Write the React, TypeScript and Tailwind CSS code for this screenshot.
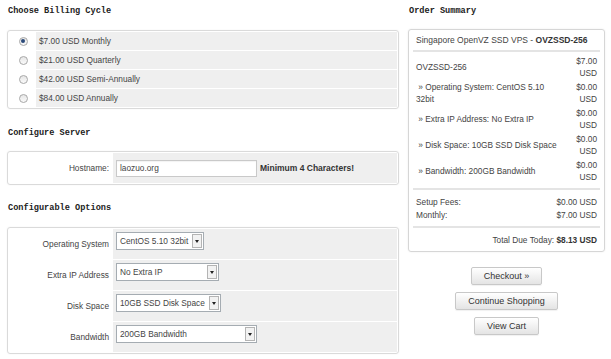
import React from "react";

const cycles = [
  { label: "$7.00 USD Monthly", checked: true },
  { label: "$21.00 USD Quarterly", checked: false },
  { label: "$42.00 USD Semi-Annually", checked: false },
  { label: "$84.00 USD Annually", checked: false },
];

const options = [
  { label: "Operating System", value: "CentOS 5.10 32bit", width: "w-[88px]" },
  { label: "Extra IP Address", value: "No Extra IP", width: "w-[103px]" },
  { label: "Disk Space", value: "10GB SSD Disk Space", width: "w-[105px]" },
  { label: "Bandwidth", value: "200GB Bandwidth", width: "w-[141px]" },
];

const lineItems = [
  { label: "OVZSSD-256", sub: false, price: "$7.00" },
  { label: "Operating System: CentOS 5.10 32bit", sub: true, price: "$0.00" },
  { label: "Extra IP Address: No Extra IP", sub: true, price: "$0.00" },
  { label: "Disk Space: 10GB SSD Disk Space", sub: true, price: "$0.00" },
  { label: "Bandwidth: 200GB Bandwidth", sub: true, price: "$0.00" },
];

function Heading({ children }: { children: React.ReactNode }) {
  return (
    <h2 className="font-['Liberation_Mono',monospace] text-[8.6px] font-bold leading-[12px] text-[#222]">
      {children}
    </h2>
  );
}

function Radio({ checked }: { checked: boolean }) {
  return (
    <span className="flex h-[9px] w-[9px] items-center justify-center rounded-full border border-[#a8a8a8] bg-gradient-to-b from-[#e6e6e6] to-[#fafafa]">
      {checked && <span className="h-[4px] w-[4px] rounded-full bg-[#2b4a7a]" />}
    </span>
  );
}

function Select({ value, width }: { value: string; width: string }) {
  return (
    <div
      className={`flex h-[18px] items-center justify-between border border-[#a5acb2] bg-white pl-[3px] pr-[1px] ${width}`}
    >
      <span className="whitespace-nowrap">{value}</span>
      <span className="flex h-[14px] w-[10px] shrink-0 items-center justify-center border border-[#b4b4b4] bg-[#f2f2f2]">
        <span className="h-0 w-0 border-x-[2px] border-t-[3px] border-x-transparent border-t-[#222]" />
      </span>
    </div>
  );
}

function Button({ children }: { children: React.ReactNode }) {
  return (
    <button className="h-[18px] rounded-[2px] border border-[#c8c8c8] bg-gradient-to-b from-white to-[#e4e4e4] px-[12px] text-[9px] leading-[16px] text-[#333] shadow-[0_1px_1px_rgba(0,0,0,0.06)]">
      {children}
    </button>
  );
}

export default function App() {
  return (
    <div className="flex h-[359px] w-[611px] gap-[9px] bg-white pl-[7px] font-['Liberation_Sans',Arial,sans-serif] text-[8.3px] text-[#444]">
      {/* Left column */}
      <div className="w-[392px]">
        <div className="mb-[13px] mt-[5px] pl-[1px]">
          <Heading>Choose Billing Cycle</Heading>
        </div>
        <div className="flex flex-col gap-[1px] rounded-[3px] border border-[#dadada] p-[1px] shadow-[0_0_2px_rgba(0,0,0,0.06)]">
          {cycles.map((c) => (
            <div key={c.label} className="flex h-[18px] gap-[1px]">
              <div className="flex w-[26px] items-center justify-center pl-[2px]">
                <Radio checked={c.checked} />
              </div>
              <div className="flex flex-1 items-center bg-[#efefef] pl-[3px]">{c.label}</div>
            </div>
          ))}
        </div>

        <div className="mb-[12px] mt-[18px] pl-[1px]">
          <Heading>Configure Server</Heading>
        </div>
        <div className="rounded-[3px] border border-[#dadada] p-[1px] shadow-[0_0_2px_rgba(0,0,0,0.06)]">
          <div className="flex h-[30px] gap-[1px]">
            <div className="flex w-[103px] items-center justify-end pr-[3px]">Hostname:</div>
            <div className="flex flex-1 items-center gap-[3px] bg-[#efefef] pl-[3px]">
              <div className="flex h-[17px] w-[141px] items-center border border-[#c9c9c9] bg-white pl-[3px] shadow-[inset_0_1px_1px_rgba(0,0,0,0.05)]">
                laozuo.org
              </div>
              <span className="text-[8.5px] font-bold text-[#333]">Minimum 4 Characters!</span>
            </div>
          </div>
        </div>

        <div className="mb-[13px] mt-[17px] pl-[1px]">
          <Heading>Configurable Options</Heading>
        </div>
        <div className="flex flex-col gap-[1px] rounded-[3px] border border-[#dadada] p-[1px] shadow-[0_0_2px_rgba(0,0,0,0.06)]">
          {options.map((o) => (
            <div key={o.label} className="flex h-[30px] gap-[1px]">
              <div className="flex w-[103px] items-center justify-end pr-[3px]">{o.label}</div>
              <div className="flex-1 bg-[#efefef] pl-[3px] pt-[3px]">
                <Select value={o.value} width={o.width} />
              </div>
            </div>
          ))}
        </div>
      </div>

      {/* Right column */}
      <div className="w-[197px]">
        <div className="mb-[13px] mt-[5px] pl-[1px]">
          <Heading>Order Summary</Heading>
        </div>
        <div className="-mt-[1px] rounded-[3px] border border-[#d6d6d6] px-[4px] pb-[5px] pt-[4px] shadow-[0_0_2px_rgba(0,0,0,0.08)]">
          <div className="px-[3px] text-[8.5px] leading-[12px]">
            Singapore OpenVZ SSD VPS - <b className="text-[#333]">OVZSSD-256</b>
          </div>
          <div className="mt-[4px] h-[2px] bg-[#e4e4e4]" />

          <div className="mt-[3px] flex flex-col gap-[2px] px-[3px] leading-[12px]">
            {lineItems.map((it) => (
              <div key={it.label} className="flex items-center justify-between">
                <div className="w-[145px]">
                  {it.sub ? `\u00a0» ${it.label}` : it.label}
                </div>
                <div className="w-[26px] text-right">
                  {it.price}
                  <br />
                  USD
                </div>
              </div>
            ))}
          </div>

          <div className="mt-[5px] h-[2px] bg-[#e4e4e4]" />
          <div className="mt-[6px] px-[3px] leading-[13px]">
            <div className="flex justify-between">
              <span>Setup Fees:</span>
              <span>$0.00 USD</span>
            </div>
            <div className="flex justify-between">
              <span>Monthly:</span>
              <span>$7.00 USD</span>
            </div>
          </div>
          <div className="mt-[4px] h-[2px] bg-[#e4e4e4]" />
          <div className="mt-[6px] px-[3px] text-right leading-[12px]">
            Total Due Today: <b className="text-[#333]">$8.13 USD</b>
          </div>
        </div>

        <div className="mt-[15px] flex flex-col items-center gap-[7px]">
          <Button>Checkout »</Button>
          <Button>Continue Shopping</Button>
          <Button>View Cart</Button>
        </div>
      </div>
    </div>
  );
}
